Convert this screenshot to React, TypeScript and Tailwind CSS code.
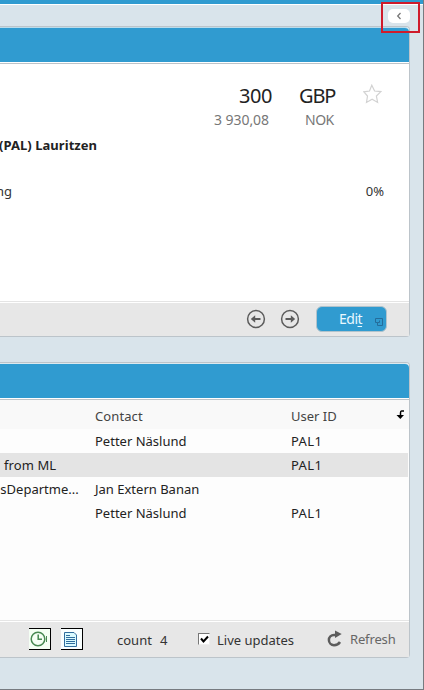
import React from "react";

const rows = [
  { name: "", contact: "Petter Näslund", user: "PAL1" },
  { name: "from ML", contact: "", user: "PAL1", selected: true },
  { name: "isDepartme...", contact: "Jan Extern Banan", user: "" },
  { name: "", contact: "Petter Näslund", user: "PAL1" },
];

function ArrowCircle({ right = false }: { right?: boolean }) {
  return (
    <svg width="20" height="20" viewBox="0 0 20 20" fill="none" stroke="#5c5c5c" className={right ? "rotate-180" : ""}>
      <circle cx="10" cy="10" r="8.4" strokeWidth="1.5" />
      <path d="M6.5 10H14.5" strokeWidth="2" />
      <path d="M9.2 6.2V13.8L4.8 10Z" fill="#5c5c5c" stroke="none" />
    </svg>
  );
}

function TopBar() {
  return (
    <header className="h-[26px] w-[423px] border-t-4 border-[#309bd0]">
      <div className="flex h-[22px] justify-end border-t border-white pr-[13px] pt-[4px]">
        <button className="flex h-[14px] w-[22px] items-center justify-center rounded-[5px] bg-white">
          <svg width="6" height="8" viewBox="0 0 6 8" fill="none" stroke="#777" strokeWidth="1.3">
            <path d="M4.5 1L1.7 4L4.5 7" />
          </svg>
        </button>
      </div>
    </header>
  );
}

function SummaryPanel() {
  return (
    <section className="h-[311px] w-[410px] rounded-r-[4px] border-y border-r border-[#bcc4ca] bg-white">
      <div className="h-[37px] rounded-tr-[4px] border-b border-t border-b-[#bdc3c8] border-t-[#b9dcec] bg-white pb-px">
        <div className="h-full rounded-tr-[4px] bg-[#309bd0]" />
      </div>
      <div className="h-[237px] pt-[18px]">
        <div className="flex h-[28px] text-[20px] leading-[28px] text-[#222]">
          <span className="ml-[239px] w-[60px] tracking-[-0.5px]">300</span>
          <span className="w-[64px] tracking-[-1.1px]">GBP</span>
          <svg className="mt-[2px]" width="19" height="20" viewBox="0 0 19 20" fill="none" stroke="#d2d2d2" strokeWidth="1.2">
            <path d="M8.8 1.2L11.6 7L17.8 7.6L13.4 12L14.6 18.4L9.1 15.3L3.5 18.4L4.5 12L.9 7.8L6.5 7Z" />
          </svg>
        </div>
        <div className="flex h-[20px] text-[14px] leading-[20px] text-[#777]">
          <span className="ml-[214px] w-[91px] tracking-[-0.05px]">3 930,08</span>
          <span className="tracking-[-0.5px]">NOK</span>
        </div>
        <div className="-ml-px mt-[5px] h-[20px] font-bold leading-[20px] tracking-[0.05px] text-[#222]">(PAL) Lauritzen</div>
        <div className="mt-[26px] flex h-[20px] justify-between pr-[25px] leading-[20px] text-[#333]">
          <span className="-ml-[4px]">ng</span>
          <span>0%</span>
        </div>
      </div>
      <footer className="flex h-[35px] items-center border-t border-[#e4e4e4] bg-[#e7e7e7] pl-[246px] shadow-[inset_0_1px_0_#fff]">
        <ArrowCircle />
        <span className="ml-[14px] h-[20px]"><ArrowCircle right /></span>
        <button className="ml-[16px] flex h-[26px] w-[71px] items-center justify-between rounded-[6px] border border-[#b1c3cc] bg-[#309bd0] pl-[22px] pr-[3px] text-[14px] text-[#e9f8ff]">
          <span className="tracking-[-0.5px]">Edi<span className="underline underline-offset-2">t</span></span>
          <svg className="mt-[5px]" width="8" height="8" viewBox="0 0 8 8" fill="none" stroke="#246d9b">
            <path d="M.5 .5H7.5V7.5H2.5V4.5H.5V.5M2.5 4.5H4.5V2.5" />
          </svg>
        </button>
      </footer>
    </section>
  );
}

function FooterBar() {
  return (
    <footer className="flex h-[37px] items-center border-t border-[#e5e5e5] bg-[#e7e7e7] pl-[29px] shadow-[inset_0_1px_0_#fff]">
      <button className="h-[22px] w-[22px] border-b border-r border-t border-black bg-[#f4fff4]">
        <svg width="21" height="20" viewBox="0 0 21 20" fill="none" stroke="#478952" strokeWidth="1.5">
          <circle cx="9" cy="10" r="6.8" /><path d="M9.2 5.4V10.2H13" /><path d="M17.5 7V13" strokeWidth="1" />
        </svg>
      </button>
      <button className="ml-[10px] h-[22px] w-[22px] border-b border-r border-t border-black bg-[#f9ffff]">
        <svg width="21" height="20" viewBox="0 0 21 20" fill="none" stroke="#306e9e">
          <path d="M3.5 3.5H13L15.5 6V17.5H3.5Z" fill="#d9fbff" /><path d="M5 6.5H9M5 8.5H14M5 10.5H14M5 12.5H14M5 14.5H14" />
        </svg>
      </button>
      <span className="ml-[34px] w-[43px] translate-y-px text-[#333]">count</span>
      <span className="w-[38px] translate-y-px text-[#333]">4</span>
      <span className="flex h-[12px] w-[12px] items-center justify-center border border-l-[#777] border-t-[#777] border-b-[#eee] border-r-[#eee] bg-white">
        <svg width="9" height="9" viewBox="0 0 9 9" fill="none" stroke="#000" strokeWidth="2"><path d="M1 3.5L3.5 6.5L8 1.5" /></svg>
      </span>
      <span className="ml-[7px] w-[110px] translate-y-px text-[#333]">Live updates</span>
      <svg width="16" height="18" viewBox="0 0 16 18" fill="none">
        <path d="M10 5H7A5.1 5.1 0 0 0 7 15.2Q11 15.2 13 12" stroke="#5c5c5c" strokeWidth="2.5" /><path d="M8 .5L14.7 4L8 8Z" fill="#5c5c5c" />
      </svg>
      <span className="ml-[7px] tracking-[-0.15px] text-[#666]">Refresh</span>
    </footer>
  );
}

function ActivityPanel() {
  return (
    <section className="mt-[25px] h-[296px] w-[410px] rounded-r-[4px] border-y border-r border-[#bcc4ca] bg-[#fdfdfd]">
      <div className="h-[37px] rounded-tr-[4px] border-b border-t border-b-[#bdc3c8] border-t-[#dce9ee] bg-white pb-px">
        <div className="h-full rounded-tr-[4px] bg-[#309bd0]" />
      </div>
      <div className="h-[220px]">
        <div className="flex h-[29px] items-center bg-[#f9f9f9] pt-[3px] text-[#444]">
          <span className="ml-[95px] w-[196px] tracking-[0.1px]">Contact</span>
          <span className="w-[105px]">User ID</span>
          <svg className="-translate-y-0.5" width="9" height="11" viewBox="0 0 9 11"><path d="M8 2H5.5Q4.5 2 4.5 4V8" fill="none" stroke="#000" strokeWidth="1.5" /><path d="M.5 6H8L4.3 10Z" fill="#000" /></svg>
        </div>
        {rows.map((row, index) => (
          <div key={index} className={"flex h-[24px] w-[408px] items-center whitespace-nowrap text-[#222] " + (row.selected ? "bg-[#e4e4e4]" : "")}>
            <span className={"w-[95px] " + (row.selected ? "pl-[4px] tracking-[0.1px]" : "-indent-[3px]")}>{row.name}</span>
            <span className="w-[196px]">{row.contact}</span>
            <span className="tracking-[0.4px]">{row.user}</span>
          </div>
        ))}
      </div>
      <FooterBar />
    </section>
  );
}

export default function App() {
  return (
    <main className="relative h-[690px] w-[424px] overflow-hidden border-b border-r border-[#777b80] bg-[#d9e4eb] font-['Noto_Sans',sans-serif] text-[13px] leading-[20px]">
      <TopBar />
      <SummaryPanel />
      <ActivityPanel />
      <div className="absolute left-[381px] top-[2px] h-[31px] w-[39px] border-2 border-[#cf1b2b]" />
    </main>
  );
}
